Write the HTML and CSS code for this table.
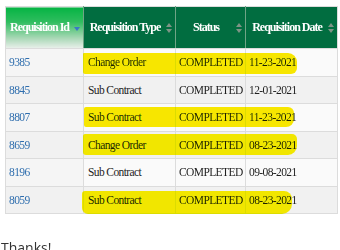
FILE: index.html
```html
<!DOCTYPE html>
<html>
<head>
<meta charset="utf-8">
<link rel="stylesheet" href="styles.css">
</head>
<body>
<table class="grid">
  <colgroup>
    <col class="c1"><col class="c2"><col class="c3"><col class="c4">
  </colgroup>
  <thead>
    <tr>
      <th class="active"><div class="hd"><span class="t">Requisition Id</span><svg class="down" width="6" height="4" viewBox="0 0 6 4"><polygon points="0,0 6,0 3,4" fill="#3a78c8"/></svg></div></th>
      <th><div class="hd"><span class="t">Requisition Type</span><svg class="sort" width="6" height="10" viewBox="0 0 6 10"><polygon points="0,4 3,0 6,4" fill="#7e9486"/><polygon points="0,6 6,6 3,10" fill="#7e9486"/></svg></div></th>
      <th><div class="hd"><span class="t">Status</span><svg class="sort" width="6" height="10" viewBox="0 0 6 10"><polygon points="0,4 3,0 6,4" fill="#7e9486"/><polygon points="0,6 6,6 3,10" fill="#7e9486"/></svg></div></th>
      <th><div class="hd"><span class="t">Requisition Date</span><svg class="sort" width="6" height="10" viewBox="0 0 6 10"><polygon points="0,4 3,0 6,4" fill="#7e9486"/><polygon points="0,6 6,6 3,10" fill="#7e9486"/></svg></div></th>
    </tr>
  </thead>
  <tbody>
    <tr class="odd">
      <td class="id">9385</td>
      <td class="type"><span class="hl hl-a"></span>Change Order</td>
      <td>COMPLETED</td>
      <td>11-23-2021</td>
    </tr>
    <tr class="even">
      <td class="id">8845</td>
      <td class="type">Sub Contract</td>
      <td>COMPLETED</td>
      <td>12-01-2021</td>
    </tr>
    <tr class="odd">
      <td class="id">8807</td>
      <td class="type"><span class="hl hl-b"></span>Sub Contract</td>
      <td>COMPLETED</td>
      <td>11-23-2021</td>
    </tr>
    <tr class="even">
      <td class="id">8659</td>
      <td class="type"><span class="hl hl-c"></span>Change Order</td>
      <td>COMPLETED</td>
      <td>08-23-2021</td>
    </tr>
    <tr class="odd">
      <td class="id">8196</td>
      <td class="type">Sub Contract</td>
      <td>COMPLETED</td>
      <td>09-08-2021</td>
    </tr>
    <tr class="even">
      <td class="id">8059</td>
      <td class="type"><span class="hl hl-d"></span>Sub Contract</td>
      <td>COMPLETED</td>
      <td>08-23-2021</td>
    </tr>
  </tbody>
</table>
<p class="thanks">Thanks!</p>
</body>
</html>
```

FILE: styles.css
```css
html, body {
  margin: 0;
  padding: 0;
  background: #ffffff;
}

.grid {
  margin: 6px 0 0 5px;
  width: 332px;
  table-layout: fixed;
  border-collapse: collapse;
  border: 1px solid #dcdcdc;
  font-family: "Liberation Serif", serif;
}

.c1 { width: 78px; }
.c2 { width: 92px; }
.c3 { width: 70px; }
.c4 { width: 92px; }

.grid th {
  height: 41px;
  padding: 0 3px 0 2px;
  background: #016d40;
  color: #ffffff;
  font-size: 12px;
  font-weight: bold;
  letter-spacing: -1px;
  border-left: 1px solid #6fa486;
  border-bottom: 1px solid #dcdcdc;
  white-space: nowrap;
}

.grid th.active {
  background: linear-gradient(to bottom, #05b443 0%, #2fbd5f 35%, #a9d8b6 75%, #eaf0ec 100%);
  border-left: none;
}

.hd {
  display: flex;
  align-items: center;
}

.hd .t {
  flex: 1;
  text-align: center;
}

.hd .sort {
  flex: none;
  margin-left: 2px;
}

.hd .down {
  flex: none;
  margin-left: 3px;
  margin-top: 3px;
}

.grid td {
  height: 26.5px;
  padding: 0 0 0 3px;
  font-size: 11.5px;
  letter-spacing: -0.6px;
  color: #1e1e1e;
  border: 1px solid #dcdcdc;
  white-space: nowrap;
}

.grid tr.odd td { background: #fafafa; }
.grid tr.even td { background: #f1f1f1; }
.grid tr.odd td.id { background: #f5f5f5; }

.grid td.id {
  color: #2f6eae;
  padding-left: 3px;
}

.grid td.type {
  position: relative;
  padding-left: 4px;
}

.hl {
  position: absolute;
  left: -1px;
  background: #f7e600;
  mix-blend-mode: darken;
  pointer-events: none;
}

.hl-a {
  top: 4px;
  height: 21px;
  width: 214px;
  border-radius: 1px 9px 6px 2px;
}

.hl-b {
  top: 3px;
  height: 20px;
  width: 210px;
  left: 0;
  border-radius: 2px 6px 8px 2px;
}

.hl-c {
  top: 2px;
  height: 21px;
  width: 214px;
  border-radius: 2px 5px 9px 3px;
}

.hl-d {
  top: 4px;
  height: 23px;
  width: 210px;
  left: -2px;
  border-radius: 3px 8px 10px 6px;
}

.thanks {
  margin: 24px 0 0 1px;
  font-family: "Open Sans", "DejaVu Sans", sans-serif;
  font-size: 14px;
  color: #333333;
}
```
